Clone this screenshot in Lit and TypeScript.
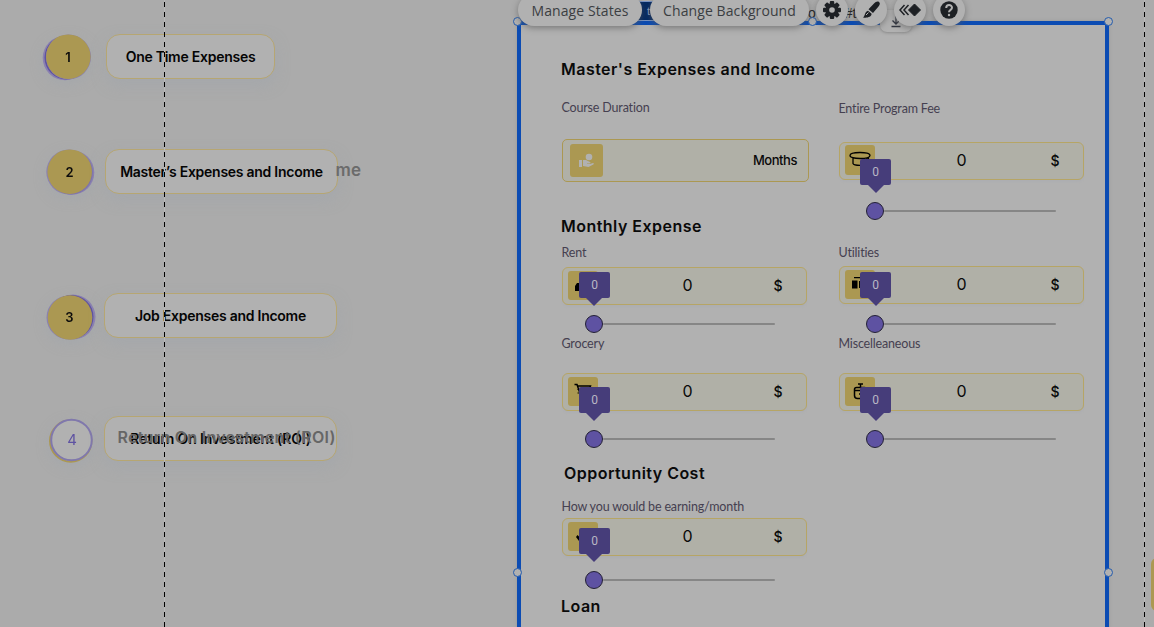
import { LitElement, html, css, svg } from "lit";
import { customElement, property } from "lit/decorators.js";

const glyphs: Record<string, unknown> = {
  cap: svg`<path d="M5 10.5C5 8.500 9.500 7.500 15 7.500S25 8.500 25 10.500 20.500 13.500 15 13.500 5 12.500 5 10.500ZM8 13v5.500c1 2.500 13 2.500 14 0V13M23.500 12v6" fill="none" stroke="#000" stroke-width="1.300"/>`,
  house: svg`<path d="M7 20v-5l2-3h13v8Z" fill="#000"/>`,
  power: svg`<path d="M7 10.500h5.500v8H7ZM9 7h8v1.300H9ZM14 11h7v7h-7Z" fill="#000"/>`,
  cart: svg`<path d="M6.500 7.500h2.500l3 9h9M10 9h12.500l-2 6" fill="none" stroke="#000" stroke-width="1.500"/><path d="M9.500 12.500h2M9.500 16h2" stroke="#000"/>`,
  bag: svg`<path d="M13 7h5M15.500 7v3M11.500 10.500h8q2 0 2 2v6q0 3-3 3h-6q-3 0-3-3v-6q0-2 2-2ZM10 13.500h11M14 17h2" fill="none" stroke="#000" stroke-width="1.500"/>`,
  tick: svg`<path d="m8 15 1.500-2 4 4-2.500 2Z" fill="#000"/>`,
};

interface Slot {
  label: string;
  icon: string;
  lead?: number;
  toBox: number;
  toSlider: number;
  side?: string;
}

@customElement("cost-field")
export class CostField extends LitElement {
  @property({ attribute: false }) slotData!: Slot;

  static styles = css`
    :host { display: block; width: 245px; }
    .label { height: 16px; font: 400 12.5px/18px Lato, sans-serif; color: #454050; white-space: nowrap; letter-spacing: -0.17px; margin-left: -0.5px; }
    .box { box-sizing: border-box; width: 245px; height: 38px; border: 1px solid #b6a565; border-radius: 6px; background: #b0b0a7; box-shadow: 0 2px 2px #adaeb1;
      display: grid; grid-template-columns: 30px 1fr 20px 18px; align-items: center; padding-left: 5px; }
    .icon { width: 30px; height: 29px; border-radius: 3px; background: #ab9852; margin-top: -1px; }
    .icon.tall { height: 30px; margin-top: -3px; }
    .icon svg { display: block; }
    .value { font: 400 16px/20px Inter, sans-serif; color: #0a0a0a; text-align: center; padding: 0 0 2px 9px; }
    .right .value { padding-left: 3px; }
    .unit { font: 500 14px/20px Inter, sans-serif; color: #0a0a0a; text-align: center; padding-bottom: 1px; }
    .slider { position: relative; width: 190px; height: 18px; margin-left: 23px; display: flex; align-items: center; }
    .right .slider { margin-left: 27px; }
    .track { height: 2px; flex: 1; background: #868686; border-radius: 1px; }
    .knob { box-sizing: border-box; width: 18px; height: 18px; border-radius: 50%; border: 1px solid #232035; background: #5e52a2; }
    .tip { position: absolute; left: -6px; top: -43px; width: 31px; height: 26px; border-radius: 2px; background: #463d7a; color: #b9b7c4; text-align: center; font: 400 12px/26px Roboto, sans-serif; }
    .tip::after { content: ""; position: absolute; left: 7.500px; top: 26px; border: 8px solid transparent; border-bottom: 0; border-top-color: #463d7a; }
    .left .tip::after { left: 7px; }
  `;

  render() {
    const s = this.slotData;
    return html`<div class=${s.side ?? "left"}>
      <div class="label" style="margin-top:${s.lead ?? 0}px">${s.label}</div>
      <div class="box" style="margin-top:${s.toBox}px">
        <div class="icon ${s.icon === "cap" ? "tall" : ""}"><svg width="30" height="29" viewBox="0 0 30 29">${glyphs[s.icon]}</svg></div>
        <div class="value">0</div><div class="unit">$</div>
      </div>
      <div class="slider" style="margin-top:${s.toSlider}px">
        <div class="knob"></div><div class="track"></div><div class="tip">0</div>
      </div>
    </div>`;
  }
}

@customElement("app-root")
export class AppRoot extends LitElement {
  static styles = css`
    :host { display: block; width: 1154px; height: 627px; overflow: hidden; background: #ababab; position: relative; font-family: Inter, sans-serif; }
    .page { display: grid; grid-template-columns: 517px 592px 1fr; height: 627px; overflow: hidden; }
    .steps { padding: 34px 0 0 42px; display: flex; flex-direction: column; }
    .step { display: flex; height: 45px; }
    .s2 { margin-top: 70px; } .s3 { margin-top: 99px; } .s4 { margin-top: 78px; }
    .badge { width: 64px; flex: none; }
    .badge.b2 { width: 63px; } .badge.b3, .badge.b4 { width: 62px; }
    .badge svg { display: block; overflow: visible; filter: drop-shadow(0 4px 6px #a0a5ac88); }
    .num { font: 600 13px Inter, sans-serif; text-anchor: middle; fill: #0c0c0c; }
    .num.open { font-weight: 400; font-size: 15px; fill: #5e52a2; }
    .pill { box-sizing: border-box; height: 45px; border: 1px solid #b6a672; border-radius: 14px; background: #b1b1b1; box-shadow: 0 6px 14px #a0a5ac88; position: relative;
      font: 600 14px/44px Inter, sans-serif; color: #050505; text-align: center; white-space: nowrap; letter-spacing: -0.26px; }
    .p1 { width: 169px; } .p2 { width: 233px; } .p3, .p4 { width: 233px; }
    .p4 { letter-spacing: -0.17px; }
    .ghost { position: absolute; font: 600 17px/24px Inter, sans-serif; color: #6b6b6b; letter-spacing: 0; white-space: nowrap; }
    .tail { left: 229.500px; top: 8px; letter-spacing: 0.2px; }
    .roi { left: 12.500px; top: 8px; color: #666; font-size: 16px; letter-spacing: 0.26px; }
    .panel { box-sizing: border-box; margin-top: 21px; height: 640px; border: 4px solid #0c4cb3; background: #b1b1b1; padding: 32px 0 0 40px; box-shadow: 0 0 3px #8888; }
    h2 { margin: 0; height: 24px; font: 600 16px/24px Inter, sans-serif; color: #0a0a0a; white-space: nowrap; letter-spacing: 0.47px; }
    .row { display: grid; grid-template-columns: 277px 245px; margin-left: 1px; }
    .r1 { margin-top: 18px; height: 121px; }
    .monthly { margin-top: -6px; }
    .r2 { margin-top: 6px; height: 89px; } .r3 { margin-top: 2px; height: 113px; }
    .opp { margin: 13px 0 0 3px; } .r4 { margin-top: 13px; height: 91px; } .loan { margin-top: 5px; }
    .label { height: 16px; font: 400 12.5px/18px Lato, sans-serif; color: #454050; letter-spacing: -0.17px; margin-left: -0.5px; }
    .duration { box-sizing: border-box; width: 247px; height: 43px; margin-top: 24px; border: 1px solid #ab9852; border-radius: 5px; background: #b0b0a7; display: flex; align-items: center; justify-content: space-between; padding: 0 11px 0 7px; font: 500 13px/20px Inter, sans-serif; color: #090909; }
    .months { letter-spacing: -0.45px; padding-bottom: 2px; }
    .hand { width: 33px; height: 33px; border-radius: 3px; background: #ab9852; }
    .hand svg { display: block; }
    .guide { position: absolute; top: 0; width: 1px; height: 627px; background: repeating-linear-gradient(#000 0 5px, #b9b9b9 5px 10px); background-position: 0 2px; }
    .g1 { left: 164px; } .g2 { left: 1144px; }
    .grip { position: absolute; box-sizing: border-box; width: 9px; height: 9px; border-radius: 50%; background: #b1b1b1; border: 1px solid #245cae; }
    .accent { position: absolute; left: 1151px; top: 558px; width: 20px; height: 53px; border-radius: 6px; background: #ab9852; }
    .tag { position: absolute; left: 632px; top: 1px; width: 28px; height: 18px; border: 1px solid #7894c5; background: #042a63; color: #8fa3c4; font: 11px/18px "Liberation Sans", sans-serif; text-indent: 14px; }
    .under { position: absolute; left: 808px; top: 4px; display: flex; gap: 29px; font: 14px/18px "Liberation Sans", sans-serif; color: #222; }
    .save { position: absolute; left: 880px; top: 10px; width: 32px; height: 22px; border-radius: 7px; background: #b1b1b1; box-shadow: 0 1px 3px #6668; }
    .save svg { display: block; }
    .tools { position: absolute; left: 518px; top: -6px; display: flex; }
    .tool { height: 32px; border-radius: 16px; background: #b1b1b1; box-shadow: 0 2px 6px #5559; font: 400 14px/33px "Open Sans", sans-serif; color: #3b3e42; text-align: center; white-space: nowrap; letter-spacing: 0.1px; }
    .states { width: 124px; } .background { width: 159px; margin-left: 8px; }
    .round { width: 32px; margin-left: 7px; }
    .round svg { display: block; }
  `;

  private grips = [[513, 17], [808, 17], [1104, 17], [513, 568], [1104, 568]];

  private field(s: Slot) {
    return html`<cost-field .slotData=${s}></cost-field>`;
  }

  render() {
    return html`
      <div class="page">
        <div class="steps">
          <div class="step">
            <div class="badge"><svg width="54" height="46"><circle cx="23" cy="24" r="22.300" fill="#8a80b0"/><circle cx="24.500" cy="23.500" r="22" fill="#5e52a2"/><circle cx="26.500" cy="23" r="22.500" fill="#8a80b0"/><circle cx="26.300" cy="22.700" r="22.300" fill="#ab9852"/><text class="num" x="26" y="27.500">1</text></svg></div>
            <div class="pill p1">One Time Expenses</div>
          </div>
          <div class="step s2">
            <div class="badge b2"><svg width="54" height="46"><circle cx="26.800" cy="23" r="22.500" fill="#8a80b0"/><circle cx="30" cy="23.500" r="22.300" fill="#8a80b0"/><circle cx="28.800" cy="23.500" r="22" fill="#7c72ad"/><circle cx="27.700" cy="22.700" r="22.300" fill="#ab9852"/><text class="num" x="27.500" y="27.500">2</text></svg></div>
            <div class="pill p2">Master’s Expenses and Income<span class="ghost tail">me</span></div>
          </div>
          <div class="step s3">
            <div class="badge b3"><svg width="54" height="46"><circle cx="31" cy="24" r="22.500" fill="#8a80b0"/><circle cx="26.500" cy="24.500" r="22" fill="#8a80b0"/><circle cx="29.500" cy="24" r="22" fill="#5e52a2"/><circle cx="28" cy="24.500" r="22.300" fill="#ab9852"/><text class="num" x="27.500" y="29">3</text></svg></div>
            <div class="pill p3">Job Expenses and Income</div>
          </div>
          <div class="step s4">
            <div class="badge b4"><svg width="54" height="46"><circle cx="28.700" cy="25" r="20.700" fill="none" stroke="#ab9852" stroke-width="2"/><circle cx="29.500" cy="24" r="20.300" fill="#b1b1b1" stroke="#8078ac" stroke-width="2"/><text class="num open" x="30" y="29">4</text></svg></div>
            <div class="pill p4">Return On Investment (ROI)<span class="ghost roi">Return On Investment (ROI)</span></div>
          </div>
        </div>

        <div class="panel">
          <h2>Master's Expenses and Income</h2>
          <div class="row r1">
            <div>
              <div class="label">Course Duration</div>
              <div class="duration">
                <div class="hand"><svg width="33" height="33" viewBox="0 0 33 33" fill="#b1b1b1"><circle cx="19" cy="13" r="3.300"/><path d="M9 16h3v7H9ZM13 16h3l4 2c1 .5.500 1.500-.5 1.500H17v.6h3l3-1c1 0 1 1 .3 1.500L18.500 23 13 22Z"/></svg></div>
                <span class="months">Months</span>
              </div>
            </div>
            ${this.field({ label: "Entire Program Fee", icon: "cap", lead: 1, toBox: 26, toSlider: 22, side: "right" })}
          </div>
          <h2 class="monthly">Monthly Expense</h2>
          <div class="row r2">
            ${this.field({ label: "Rent", icon: "house", toBox: 7, toSlider: 10 })}
            ${this.field({ label: "Utilities", icon: "power", toBox: 6, toSlider: 11, side: "right" })}
          </div>
          <div class="row r3">
            ${this.field({ label: "Grocery", icon: "cart", toBox: 22, toSlider: 19 })}
            ${this.field({ label: "Miscelleaneous", icon: "bag", toBox: 22, toSlider: 19, side: "right" })}
          </div>
          <h2 class="opp">Opportunity Cost</h2>
          <div class="row r4">
            ${this.field({ label: "How you would be earning/month", icon: "tick", toBox: 4, toSlider: 15 })}
          </div>
          <h2 class="loan">Loan</h2>
        </div>
      </div>

      <div class="guide g1"></div><div class="guide g2"></div>
      <div class="accent"></div>
      <div class="tag">t</div>
      <div class="under"><span>o</span><span>#t</span></div>
      ${this.grips.map(([x, y]) => html`<div class="grip" style="left:${x}px;top:${y}px"></div>`)}
      <div class="save"><svg width="32" height="22" fill="none" stroke="#30343f" stroke-width="1.300"><path d="M16 5v9M12.500 10.500 16 14l3.500-3.500M11.500 16.500h9"/></svg></div>
      <div class="tools">
        <div class="tool states">Manage States</div>
        <div class="tool background">Change Background</div>
        <div class="tool round"><svg width="32" height="32" viewBox="-16 -16 32 32"><g fill="#1d2024">${[0, 45, 90, 135].map(a => svg`<rect x="-2.200" y="-9" width="4.400" height="18" rx="1" transform="rotate(${a})"/>`)}<circle r="6.700"/></g><circle r="2.800" fill="#b1b1b1"/></svg></div>
        <div class="tool round"><svg width="32" height="32" viewBox="-16 -16 32 32" fill="#1d2024"><path d="M8-8c1.500 1 .8 3-.5 4.500L2 3-2.500-.8 3-6.500C4.500-8 6.500-9 8-8Z"/><path d="M-3 .8.600 3.800C.5 7-4 8.300-8 7.500-5.500 6-6.500 1.500-3 .8Z"/><path d="m-5 5 2.500-2.500" stroke="#b1b1b1"/></svg></div>
        <div class="tool round"><svg width="32" height="32" viewBox="-16 -16 32 32"><path d="M4.500-6 10.500 0l-6 6-6-6Z" fill="#1d2024" stroke="#1d2024" stroke-linejoin="round"/><path d="M-1.500-5-6 0l4.500 5M-5.500-5-10 0l4.500 5" fill="none" stroke="#1d2024" stroke-width="1.500"/></svg></div>
        <div class="tool round"><svg width="32" height="32" viewBox="-16 -16 32 32"><circle r="8.700" fill="#1d2024"/><path d="M-2.800-2C-2.800-6 3-6 3-2.200 3 0 0-.3 0 2.300" fill="none" stroke="#b1b1b1" stroke-width="2"/><circle cy="5" r="1.200" fill="#b1b1b1"/></svg></div>
      </div>
    `;
  }
}
